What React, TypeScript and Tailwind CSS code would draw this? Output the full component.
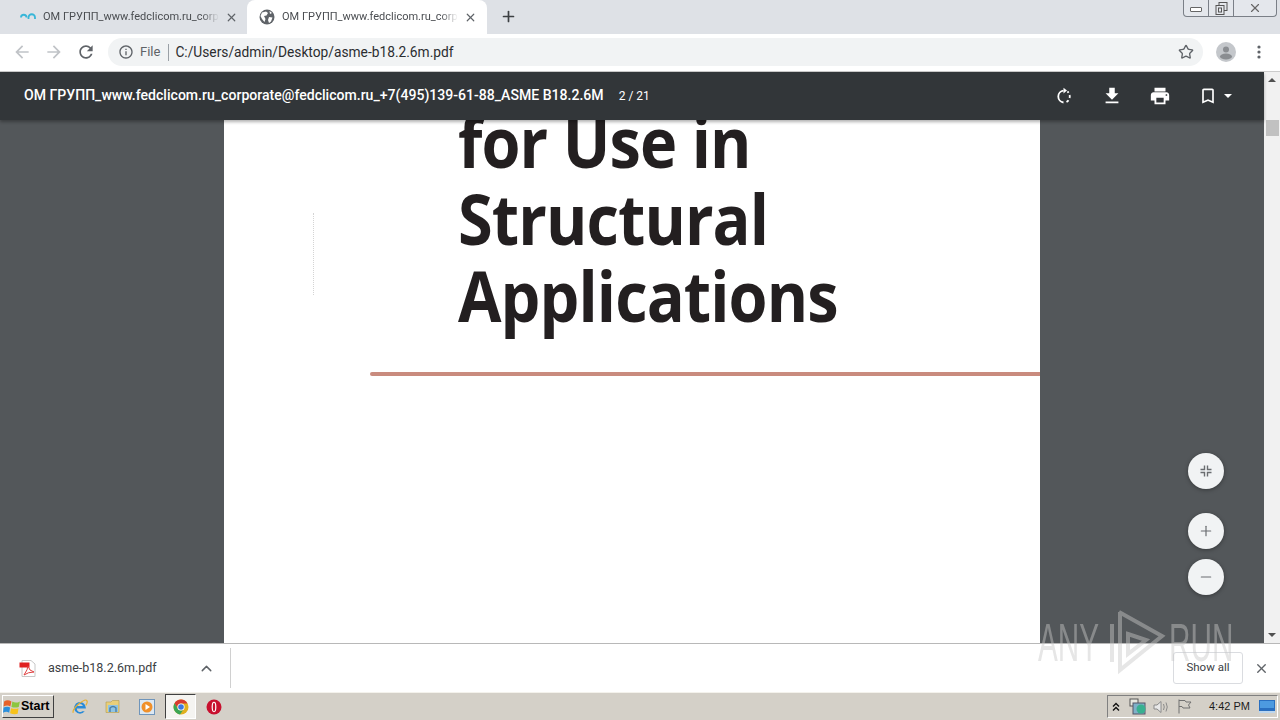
import { ChevronUp, Minus, Plus, Star, X } from "lucide-react";

const tabTitle = "ОМ ГРУПП_www.fedclicom.ru_corporate@fedclicom.ru_+7(495)139-61-88";

const Mat = ({ d, size = 24, className }: { d: string; size?: number; className?: string }) => (
    <svg width={size} height={size} viewBox="0 0 24 24" fill="currentColor" className={className}>
        <path d={d} />
    </svg>
);

const icons = {
    back: "M20 11H7.83l5.59-5.59L12 4l-8 8 8 8 1.41-1.41L7.83 13H20v-2z",
    forward: "M12 4l-1.41 1.41L16.17 11H4v2h12.17l-5.58 5.59L12 20l8-8z",
    reload: "M17.65 6.35C16.2 4.9 14.21 4 12 4c-4.42 0-7.99 3.58-7.99 8s3.57 8 7.99 8c3.73 0 6.84-2.55 7.73-6h-2.08c-.82 2.33-3.04 4-5.65 4-3.31 0-6-2.69-6-6s2.69-6 6-6c1.66 0 3.14.69 4.22 1.78L13 11h7V4l-2.35 2.35z",
    info: "M11 7h2v2h-2zm0 4h2v6h-2zm1-9C6.48 2 2 6.48 2 12s4.48 10 10 10 10-4.48 10-10S17.52 2 12 2zm0 18c-4.41 0-8-3.59-8-8s3.59-8 8-8 8 3.59 8 8-3.59 8-8 8z",
    download: "M19 9h-4V3H9v6H5l7 7 7-7zM5 18v2h14v-2H5z",
    print: "M19 8H5c-1.66 0-3 1.34-3 3v6h4v4h12v-4h4v-6c0-1.66-1.34-3-3-3zm-3 11H8v-5h8v5zm3-7c-.55 0-1-.45-1-1s.45-1 1-1 1 .45 1 1-.45 1-1 1zm-1-9H6v4h12V3z",
    bookmark: "M17 3H7c-1.1 0-1.99.9-1.99 2L5 21l7-3 7 3V5c0-1.1-.9-2-2-2zm0 15l-5-2.18L7 18V5h10v13z",
};

const Globe = () => (
    <svg width="16" height="16" viewBox="0 0 16 16" className="shrink-0">
        <circle cx="8" cy="8" r="7.5" fill="#5f6368" />
        <path d="M3 3.5 L7 2.5 L9 4 L7.5 6.5 L5 7 L6.5 10 L5.5 13 L3 10 L1.5 7 Z M10 8 L13.5 8.5 L12 12.5 L10 14 L9 11 Z M10.5 2 L13 4 L11 5 Z" fill="#fff" />
    </svg>
);

const Tab = ({ active }: { active?: boolean }) => (
    <div className={active ? "relative flex h-[34px] w-[240px] items-center rounded-t-lg bg-white pl-[12px] pr-[10px]" : "relative flex h-[34px] w-[239px] items-center pl-[20px] pr-px"}>
        {active ? (
            <Globe />
        ) : (
            <svg width="16" height="8" viewBox="0 0 16 8" className="shrink-0">
                <path d="M1 4.5 A2.6 2.6 0 0 1 6.5 4.5 M8.5 6 V4.5 A2.6 2.6 0 0 1 15 4.5 V6" fill="none" stroke="#38b6d8" strokeWidth="1.8" />
            </svg>
        )}
        <span className="ml-[7px] w-[176px] overflow-hidden whitespace-nowrap text-[11px] text-[#4a4d51] [mask-image:linear-gradient(to_right,#000_90%,transparent)]">{tabTitle}</span>
        <X size={13} strokeWidth={2.2} className="ml-auto text-[#5f6368]" />
    </div>
);

const ViewerButton = ({ children }: { children: React.ReactNode }) => (
    <div className="flex size-9 items-center justify-center rounded-full bg-[#f1f3f4] text-[#6a6d70] shadow-[0_1px_4px_rgba(0,0,0,0.35)]">{children}</div>
);

const Shrink = () => (
    <svg width="12" height="12" viewBox="0 0 12 12" fill="none" stroke="#6a6d70" strokeWidth="1.4">
        <path d="M4.5 0.5 V4.5 H0.5 M7.5 0.5 V4.5 H11.5 M4.5 11.5 V7.5 H0.5 M7.5 11.5 V7.5 H11.5" />
    </svg>
);

const RotateDashed = () => (
    <svg width="18" height="18" viewBox="0 0 18 18" fill="none" stroke="#fff" strokeWidth="1.8" className="ml-auto">
        <path d="M8.5 3.6 A6 6 0 0 0 8.5 15.5" />
        <path d="M11.5 15 A6 6 0 0 0 13.5 13.2 M14.6 11 A6 6 0 0 0 14.6 8 M13.6 5.7 A6 6 0 0 0 12.4 4.6" />
        <path d="M8.5 0.8 L12 3.6 L8.5 6.4 Z" fill="#fff" stroke="none" />
    </svg>
);

const Scrollbar = () => (
    <div className="flex h-full w-[16px] shrink-0 flex-col items-center bg-[#f1f1f1]">
        <div className="mt-[6px] h-0 w-0 border-x-[4px] border-b-[4px] border-x-transparent border-b-[#505050]" />
        <div className="mt-[38px] h-[16px] w-[13px] bg-[#c1c1c1]" />
        <div className="mb-[6px] mt-auto h-0 w-0 border-x-[4px] border-t-[4px] border-x-transparent border-t-[#505050]" />
    </div>
);

const PdfIcon = () => (
    <svg width="17" height="17" viewBox="0 0 17 17" className="shrink-0">
        <path d="M3 0.5 H12 L16 4 V16.5 H3 Z" fill="#fff" stroke="#c8c8c8" />
        <rect x="0.5" y="2.5" width="10" height="5" fill="#e02020" />
        <path d="M5 15 Q9 9 9 6 Q10 11 15 12 Q9 12 5 15 Z" fill="none" stroke="#e04040" strokeWidth="1" />
    </svg>
);

const WinFlag = () => (
    <svg width="18" height="18" viewBox="0 0 16 16" className="shrink-0">
        <path d="M1 3 Q4 1 7.5 3 L6.5 7.5 Q4 6 0.5 7.5 Z" fill="#e8622a" />
        <path d="M8.3 3.2 Q11.5 5 15 3 L14 8 Q11 9 7.5 8 Z" fill="#8cc63f" />
        <path d="M0.5 8.5 Q4 7 6.3 8.5 L5.5 13 Q3 11.5 0 13 Z" fill="#2b8fdc" />
        <path d="M7.2 9 Q11 10 13.8 9 L13 14 Q10 15 6.3 13.5 Z" fill="#f7c21a" />
    </svg>
);

const Taskbar = () => (
    <div className="flex h-[28px] shrink-0 items-center border-t border-t-[#f4f2ec] bg-[#d4d0c8]">
        <div className="ml-[2px] flex h-[23px] w-[52px] items-center border border-b-[#404040] border-l-white border-r-[#404040] border-t-white font-['Liberation_Sans',sans-serif] text-[12.5px] font-bold text-black">
            <WinFlag />
            <span>Start</span>
        </div>
        <div className="ml-[17px] flex w-[18px] justify-center">
            <svg width="18" height="18" viewBox="0 0 17 17">
                <path d="M14 9.5 A5.5 5.5 0 1 0 13 12.5 H10.5 A3 3 0 0 1 5.5 10 H14 Z M5.7 7.5 A3 3 0 0 1 11.3 7.5 Z" fill="#2a8bd8" fillRule="evenodd" />
                <path d="M2 14 Q1 11 8 5 Q14 0.5 15 2.5 Q16 4 14 7" fill="none" stroke="#e8b030" strokeWidth="1.1" />
            </svg>
        </div>
        <div className="ml-[16px] flex w-[16px] justify-center">
            <svg width="16" height="15" viewBox="0 0 16 15">
                <path d="M1 3 H6 L7.5 1.5 H14 V13.5 H1 Z" fill="#e9cf7a" stroke="#b09a50" strokeWidth="0.6" />
                <rect x="3" y="6" width="10" height="7" fill="#8fc4e4" />
                <path d="M5 13 V9 Q8 6 11 9 V13" fill="none" stroke="#4a7fa8" strokeWidth="1.4" />
            </svg>
        </div>
        <div className="ml-[18px] flex size-[16px] items-center justify-center border border-[#6f95bb] bg-[#dce8f3]">
            <svg width="12" height="12" viewBox="0 0 12 12">
                <circle cx="6" cy="6" r="5.5" fill="#f0902a" />
                <path d="M4.5 3 L9 6 L4.5 9 Z" fill="#fff" />
            </svg>
        </div>
        <div className="ml-[10px] flex h-[25px] w-[31px] items-center justify-center border border-b-white border-l-[#404040] border-r-white border-t-[#404040] bg-[#f5f4f1]">
            <svg width="16" height="16" viewBox="0 0 16 16">
                <circle cx="8" cy="8" r="7.5" fill="#e0b020" />
                <path d="M8 .5 A7.5 7.5 0 0 0 1.5 4.25 L4.7 9.5 A3.5 3.5 0 0 1 8 4.5 H14.5 A7.5 7.5 0 0 0 8 .5 Z" fill="#d83a30" />
                <path d="M1.5 4.25 A7.5 7.5 0 0 0 7 15.4 L10.8 10 A3.5 3.5 0 0 1 4.7 9.5 Z" fill="#3aa655" />
                <circle cx="8" cy="8" r="3.6" fill="#fff" />
                <circle cx="8" cy="8" r="2.8" fill="#3b78e0" />
            </svg>
        </div>
        <div className="ml-[10px] flex w-[16px] justify-center">
            <svg width="16" height="16" viewBox="0 0 16 16">
                <circle cx="8" cy="8" r="7.5" fill="#c8102e" />
                <ellipse cx="8" cy="8" rx="2.4" ry="5.2" fill="#fff" />
                <ellipse cx="8" cy="8" rx="1.2" ry="4.2" fill="#c8102e" />
            </svg>
        </div>
        <div className="ml-auto mr-[2px] flex h-[23px] w-[171px] items-center border border-b-white border-l-[#808080] border-r-white border-t-[#808080] font-['Liberation_Sans',sans-serif] text-[11px] text-[#1c1c1c]">
            <svg width="8" height="10" viewBox="0 0 8 10" className="ml-[4px]" fill="none" stroke="#111" strokeWidth="1.4">
                <path d="M1 4.5 L4 1.5 L7 4.5 M1 8.5 L4 5.5 L7 8.5" />
            </svg>
            <svg width="18" height="17" viewBox="0 0 18 17" className="ml-[9px]">
                <rect x="1" y="1" width="8" height="7" fill="#e8e8e0" stroke="#555" />
                <rect x="4" y="5" width="12" height="11" fill="#7fb0c8" stroke="#556" />
                <circle cx="12" cy="11" r="4.5" fill="#38b090" />
            </svg>
            <svg width="16" height="14" viewBox="0 0 16 14" className="ml-[6px]" fill="none" stroke="#8a8a8a">
                <path d="M1 5 H4 L8 1.5 V12.5 L4 9 H1 Z" fill="#e8e8e8" />
                <path d="M10.5 4 Q12 7 10.5 10 M13 2.5 Q15.5 7 13 11.5" />
            </svg>
            <svg width="15" height="15" viewBox="0 0 15 15" className="ml-[8px]" fill="none" stroke="#707070">
                <path d="M2 .5 V14.5 M2 1.5 H8 L9 3 H14 L11.5 6 L13 9 H6 L5 7.5 H2" />
            </svg>
            <span className="ml-[17px] whitespace-nowrap">4:42 PM</span>
            <svg width="16" height="13" viewBox="0 0 16 13" className="ml-auto mr-[2px]">
                <rect width="16" height="13" fill="#2a6fc0" />
                <rect x="1" y="1" width="14" height="7" fill="#4d9ae0" />
                <rect y="11" width="16" height="2" fill="#bcd6ee" />
            </svg>
        </div>
    </div>
);

export default function App() {
    return (
        <div className="relative flex h-[720px] w-[1280px] flex-col overflow-hidden bg-white font-['Roboto',sans-serif]">
            <div className="relative flex h-[34px] shrink-0 items-start bg-[#dee1e6]">
                <Tab />
                <div className="ml-[8px]">
                    <Tab active />
                </div>
                <Plus size={17} strokeWidth={2.4} className="ml-[13px] mt-[8px] text-[#3c4043]" />
                <div className="absolute right-[3px] top-0 flex h-[17px] w-[94px] rounded-b-[4px] border border-t-0 border-[#7a7f87] bg-[#e4e7ec]">
                    <div className="flex w-[25px] items-center justify-center border-r border-[#7a7f87]">
                        <div className="mt-[3px] h-[5px] w-[12px] rounded-[1px] border border-[#666] bg-white" />
                    </div>
                    <div className="flex w-[25px] items-center justify-center border-r border-[#7a7f87]">
                        <svg width="13" height="13" viewBox="0 0 13 13" fill="none" stroke="#555">
                            <rect x="4" y="0.5" width="8" height="8" />
                            <rect x="1" y="3.5" width="8" height="9" fill="#e4e7ec" />
                            <rect x="3.5" y="6" width="3" height="4" />
                        </svg>
                    </div>
                    <div className="flex flex-1 items-center justify-center">
                        <X size={14} strokeWidth={2} className="text-[#666]" />
                    </div>
                </div>
            </div>

            <div className="flex h-[38px] shrink-0 items-center border-b border-b-[#ccc] bg-white pb-px">
                <Mat d={icons.back} size={20} className="ml-[12px] text-[#c0c3c7]" />
                <Mat d={icons.forward} size={20} className="ml-[12px] text-[#c0c3c7]" />
                <Mat d={icons.reload} size={20} className="ml-[12px] text-[#5f6368]" />
                <div className="ml-[12px] flex h-[28px] w-[1095px] items-center rounded-full bg-[#f1f3f4]">
                    <Mat d={icons.info} size={16} className="ml-[10px] text-[#5f6368]" />
                    <span className="ml-[6px] text-[13px] text-[#5f6368]">File</span>
                    <div className="ml-[8px] h-[17px] w-px bg-[#9aa0a6]" />
                    <span className="ml-[6px] whitespace-nowrap text-[13.75px] text-[#2b2d30]">C:/Users/admin/Desktop/asme-b18.2.6m.pdf</span>
                    <Star size={16} strokeWidth={2} className="ml-auto mr-[9px] text-[#5f6368]" />
                </div>
                <div className="ml-[13px] flex size-[20px] items-center justify-center overflow-hidden rounded-full bg-[#c4c7cb]">
                    <svg width="20" height="20" viewBox="0 0 20 20">
                        <circle cx="10" cy="7.5" r="3" fill="#8a8d91" />
                        <ellipse cx="10" cy="14.5" rx="6" ry="3" fill="#8a8d91" />
                    </svg>
                </div>
                <svg width="4" height="14" viewBox="0 0 4 14" fill="#5f6368" className="ml-[21px]">
                    <circle cx="2" cy="2" r="1.6" />
                    <circle cx="2" cy="7" r="1.6" />
                    <circle cx="2" cy="12" r="1.6" />
                </svg>
            </div>

            <div className="flex min-h-0 flex-1">
                <div className="flex min-w-0 flex-1 flex-col">
                    <div className="z-10 flex h-[48px] shrink-0 items-center bg-[#323639] pl-[24px] text-[14.07px] text-white shadow-[0_2px_3px_rgba(0,0,0,0.3)]">
                        <span className="whitespace-nowrap font-medium">ОМ ГРУПП_www.fedclicom.ru_corporate@fedclicom.ru_+7(495)139-61-88_ASME B18.2.6M</span>
                        <span className="ml-[15px] whitespace-nowrap text-[12px]">2 / 21</span>
                        <RotateDashed />
                        <Mat d={icons.download} size={22} className="ml-[28px] shrink-0" />
                        <Mat d={icons.print} size={22} className="ml-[26px] shrink-0" />
                        <Mat d={icons.bookmark} size={20} className="ml-[27px] shrink-0" />
                        <div className="ml-[6px] mr-[32px] h-0 w-0 border-x-[4px] border-t-[4px] border-x-transparent border-t-white" />
                    </div>
                    <div className="relative flex min-h-0 flex-1 justify-center overflow-hidden bg-[#53575a]">
                        <div className="relative h-full w-[816px] bg-white">
                            <div className="ml-[234px] mt-[-17px] origin-left scale-x-[0.9] font-['Open_Sans',sans-serif] text-[70px] font-bold leading-[77px] tracking-[-1px] text-[#231f20]">
                                <div>for Use in</div>
                                <div>Structural</div>
                                <div>Applications</div>
                            </div>
                            <div className="ml-[146px] mt-[38px] h-[4px] rounded-l-full bg-[#c98b7e]" />
                            <div className="absolute left-[89px] top-[93px] h-[82px] border-l border-dotted border-[#d4d4d4]" />
                        </div>
                        <div className="absolute bottom-[48px] right-[40px] flex flex-col gap-[10px]">
                            <div className="mb-[14px]">
                                <ViewerButton>
                                    <Shrink />
                                </ViewerButton>
                            </div>
                            <ViewerButton>
                                <Plus size={16} strokeWidth={1.8} />
                            </ViewerButton>
                            <ViewerButton>
                                <Minus size={16} strokeWidth={1.8} />
                            </ViewerButton>
                        </div>
                    </div>
                </div>
                <Scrollbar />
            </div>

            <div className="flex h-[49px] shrink-0 items-center border-t border-t-[#b8b8b8] bg-white">
                <div className="ml-[19px]">
                    <PdfIcon />
                </div>
                <span className="ml-[12px] text-[12.5px] text-[#3c4043]">asme-b18.2.6m.pdf</span>
                <ChevronUp size={17} strokeWidth={2} className="ml-[41px] text-[#5f6368]" />
                <div className="ml-[15px] h-[40px] w-px bg-[#d0d0d0]" />
                <div className="ml-auto flex h-[32px] w-[70px] items-center justify-center rounded-[3px] border border-[#dadce0] text-[11.5px] text-[#3c4043]">Show all</div>
                <X size={15} strokeWidth={2.2} className="ml-[11px] mr-[11px] text-[#5f6368]" />
            </div>

            <Taskbar />

            {/* watermark over the page */}
            <div className="pointer-events-none absolute left-[1038px] top-[608px] flex h-[68px] items-center text-[#c8c8c8] opacity-45">
                <span className="w-[66px] origin-left scale-x-[0.55] whitespace-nowrap font-['Liberation_Sans',sans-serif] text-[54px] leading-none">ANY</span>
                <svg width="62" height="68" viewBox="0 0 62 68" fill="none" stroke="currentColor" strokeWidth="4">
                    <path d="M8 16 V54 M15 4 L58 28 L16 62 V4 M24 26 L42 32 L24 46 Z" />
                </svg>
                <span className="ml-[3px] w-[62px] origin-left scale-x-[0.55] whitespace-nowrap font-['Liberation_Sans',sans-serif] text-[54px] leading-none">RUN</span>
            </div>
        </div>
    );
}
